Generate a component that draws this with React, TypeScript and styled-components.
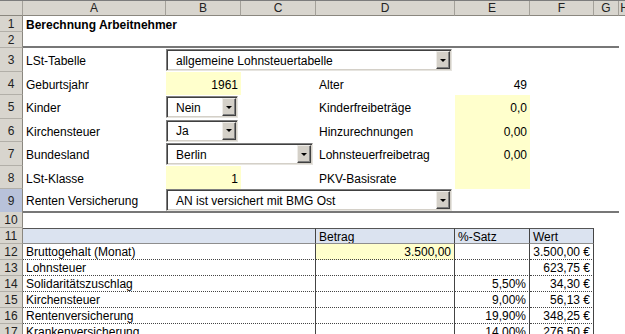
import React from 'react'
import styled, {createGlobalStyle} from 'styled-components'

const GlobalStyle = createGlobalStyle`
  html, body {
    margin: 0;
    padding: 0;
    background: #fff;
  }
  body {
    font-family: Arial, "Liberation Sans", sans-serif;
    font-size: 12px;
    color: #000;
  }
  * {
    box-sizing: border-box;
  }
`

// widths of the row header + columns A..H
const COLS = '23px 143px 75px 75px 139px 75px 64px 25px 12px 1fr'

const Sheet = styled.div`
  width: 625px;
  height: 334px;
  overflow: hidden;
  background: #fff;
`

const Row = styled.div<{ $h: number }>`
  display: grid;
  grid-template-columns: ${COLS};
  height: ${p => p.$h}px;
`

const HeadRow = styled(Row)`
  border-top: 1px solid #7c7c7c;
`

const ColHead = styled.div`
  display: flex;
  align-items: center;
  justify-content: center;
  background: #d8d5ce;
  border-right: 1px solid #a3a099;
  border-bottom: 1px solid #8a877f;
  color: #222;
  font-size: 12px;
  overflow: hidden;
`

const RowHead = styled.div<{ $active?: boolean }>`
  display: flex;
  align-items: center;
  justify-content: center;
  padding-top: 1px;
  background: ${p => p.$active ? '#b8c2da' : '#d8d5ce'};
  border-right: 1px solid #8a877f;
  border-bottom: 1px solid #b2afa8;
  color: #222;
  font-size: 12px;
`

const Cell = styled.div<{
  $span?: number
  $right?: boolean
  $fill?: string
  $bold?: boolean
  $line?: boolean
}>`
  grid-column: span ${p => p.$span ?? 1};
  display: flex;
  align-items: center;
  justify-content: ${p => p.$right ? 'flex-end' : 'flex-start'};
  min-width: 0;
  padding: 2px 3px 0 3px;
  background: ${p => p.$fill ?? 'transparent'};
  font-weight: ${p => p.$bold ? 700 : 400};
  white-space: nowrap;
  overflow: hidden;
  border-bottom: ${p => p.$line ? '2px solid #777' : 'none'};
`

const ComboCell = styled(Cell)`
  padding: 0 3px 0 0;
  overflow: visible;
`

const Combo = styled.div`
  display: flex;
  align-items: stretch;
  width: 100%;
  height: 22px;
  background: #fff;
  border-top: 1px solid #808080;
  border-left: 1px solid #808080;
  border-right: 1px solid #e6e4df;
  border-bottom: 1px solid #e6e4df;
  box-shadow: inset 1px 1px 0 #404040, inset -1px -1px 0 #d4d0c8;
`

const ComboText = styled.div`
  flex: 1;
  display: flex;
  align-items: center;
  padding: 1px 0 0 9px;
  white-space: nowrap;
  overflow: hidden;
`

const ArrowButton = styled.div`
  width: 14px;
  margin: 1px 1px 1px 0;
  display: flex;
  align-items: center;
  justify-content: center;
  background: #d4d0c8;
  border-top: 1px solid #eeece8;
  border-left: 1px solid #eeece8;
  border-right: 1px solid #404040;
  border-bottom: 1px solid #404040;
  box-shadow: inset -1px -1px 0 #808080;

  &::after {
    content: '';
    border-left: 3px solid transparent;
    border-right: 3px solid transparent;
    border-top: 3px solid #000;
  }
`

const TableHead = styled.div<{ $span?: number; $first?: boolean }>`
  grid-column: span ${p => p.$span ?? 1};
  display: flex;
  align-items: center;
  padding: 1px 3px 0;
  background: #dbe3f0;
  border-top: 1px solid #555;
  border-bottom: 1px solid #8e8e8e;
  border-right: 1px solid #444;
  white-space: nowrap;
  overflow: hidden;
`

const TableCell = styled.div<{ $span?: number; $right?: boolean; $fill?: string }>`
  grid-column: span ${p => p.$span ?? 1};
  display: flex;
  align-items: center;
  justify-content: ${p => p.$right ? 'flex-end' : 'flex-start'};
  padding: 0 3px;
  background: ${p => p.$fill ?? 'transparent'};
  border-right: 1px solid #444;
  border-bottom: 1px dotted #444;
  white-space: nowrap;
  overflow: hidden;
`

const YELLOW = '#ffffcc'

const DropDown = ({value}: { value: string }) => (
  <Combo>
    <ComboText>{value}</ComboText>
    <ArrowButton/>
  </Combo>
)

const ROW_H = [16, 16, 24, 23, 24, 23, 24, 23, 23, 16]

const tableRows = [
  {label: 'Bruttogehalt (Monat)', amount: '3.500,00', rate: '', value: '3.500,00 €'},
  {label: 'Lohnsteuer', amount: '', rate: '', value: '623,75 €'},
  {label: 'Solidaritätszuschlag', amount: '', rate: '5,50%', value: '34,30 €'},
  {label: 'Kirchensteuer', amount: '', rate: '9,00%', value: '56,13 €'},
  {label: 'Rentenversicherung', amount: '', rate: '19,90%', value: '348,25 €'},
  {label: 'Krankenversicherung', amount: '', rate: '14,00%', value: '276,50 €'},
]

export default function App() {
  return (
    <Sheet>
      <GlobalStyle/>
      <HeadRow $h={16}>
        <ColHead/>
        {['A', 'B', 'C', 'D', 'E', 'F', 'G', 'H', ''].map((c, i) => (
          <ColHead key={i}>{c}</ColHead>
        ))}
      </HeadRow>

      <Row $h={ROW_H[0]}>
        <RowHead>1</RowHead>
        <Cell $span={9} $bold>Berechnung Arbeitnehmer</Cell>
      </Row>

      <Row $h={ROW_H[1]}>
        <RowHead>2</RowHead>
        <Cell $span={7} $line/>
      </Row>

      <Row $h={ROW_H[2]}>
        <RowHead>3</RowHead>
        <Cell>LSt-Tabelle</Cell>
        <ComboCell $span={3}><DropDown value="allgemeine Lohnsteuertabelle"/></ComboCell>
      </Row>

      <Row $h={ROW_H[3]}>
        <RowHead>4</RowHead>
        <Cell>Geburtsjahr</Cell>
        <Cell $right $fill={YELLOW}>1961</Cell>
        <Cell/>
        <Cell>Alter</Cell>
        <Cell $right>49</Cell>
      </Row>

      <Row $h={ROW_H[4]}>
        <RowHead>5</RowHead>
        <Cell>Kinder</Cell>
        <ComboCell><DropDown value="Nein"/></ComboCell>
        <Cell/>
        <Cell>Kinderfreibeträge</Cell>
        <Cell $right $fill={YELLOW}>0,0</Cell>
      </Row>

      <Row $h={ROW_H[5]}>
        <RowHead>6</RowHead>
        <Cell>Kirchensteuer</Cell>
        <ComboCell><DropDown value="Ja"/></ComboCell>
        <Cell/>
        <Cell>Hinzurechnungen</Cell>
        <Cell $right $fill={YELLOW}>0,00</Cell>
      </Row>

      <Row $h={ROW_H[6]}>
        <RowHead>7</RowHead>
        <Cell>Bundesland</Cell>
        <ComboCell $span={2}><DropDown value="Berlin"/></ComboCell>
        <Cell>Lohnsteuerfreibetrag</Cell>
        <Cell $right $fill={YELLOW}>0,00</Cell>
      </Row>

      <Row $h={ROW_H[7]}>
        <RowHead>8</RowHead>
        <Cell>LSt-Klasse</Cell>
        <Cell $right $fill={YELLOW}>1</Cell>
        <Cell/>
        <Cell>PKV-Basisrate</Cell>
        <Cell $fill={YELLOW}/>
      </Row>

      <Row $h={ROW_H[8]}>
        <RowHead $active>9</RowHead>
        <Cell $line>Renten Versicherung</Cell>
        <ComboCell $span={3} $line><DropDown value="AN ist versichert mit BMG Ost"/></ComboCell>
        <Cell $span={3} $line/>
      </Row>

      <Row $h={ROW_H[9]}>
        <RowHead>10</RowHead>
      </Row>

      <Row $h={16}>
        <RowHead>11</RowHead>
        <TableHead $span={3}/>
        <TableHead>Betrag</TableHead>
        <TableHead>%-Satz</TableHead>
        <TableHead>Wert</TableHead>
      </Row>

      {tableRows.map((r, i) => (
        <Row $h={16} key={r.label}>
          <RowHead>{12 + i}</RowHead>
          <TableCell $span={3}>{r.label}</TableCell>
          <TableCell $right $fill={r.amount ? YELLOW : undefined}>{r.amount}</TableCell>
          <TableCell $right>{r.rate}</TableCell>
          <TableCell $right>{r.value}</TableCell>
        </Row>
      ))}
    </Sheet>
  )
}
